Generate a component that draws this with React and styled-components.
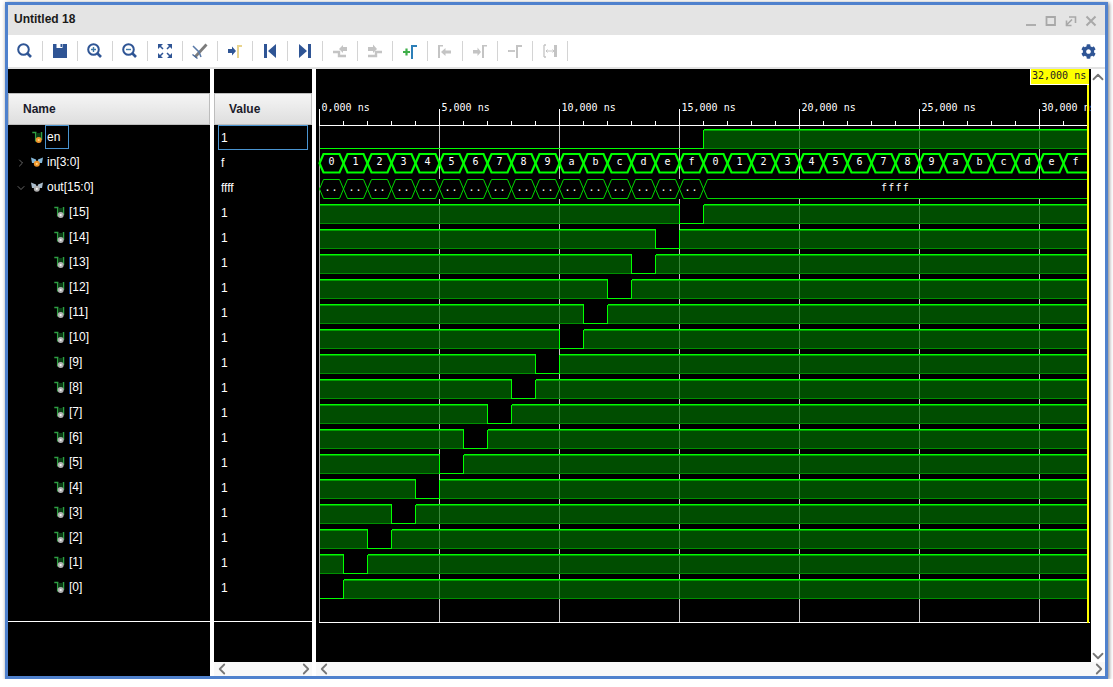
import React from 'react';
import styled, { createGlobalStyle } from 'styled-components';
import { FaCog } from 'react-icons/fa';
import { ChevronLeft, ChevronRight, ChevronUp, ChevronDown } from 'lucide-react';

const Global = createGlobalStyle`
  html, body { margin: 0; padding: 0; background: #fff; overflow: hidden; }
  * { box-sizing: border-box; }
`;

const Window = styled.div`
  width: 1103px; height: 677px; margin: 2px 0 0 5px;
  border: 3px solid #4f81cd;
  box-shadow: 1px 1px 4px rgba(0,0,0,.55);
  display: flex; flex-direction: column;
  font-family: "Liberation Sans", Arial, sans-serif;
  background: #000;
`;
const TitleBar = styled.div`
  height: 30px; background: #e4e4e4; display: flex; align-items: center;
  padding: 0 0 2px 6px; font-size: 12px; font-weight: 700; color: #1a1a1a;
  justify-content: space-between;
`;
const WinControls = styled.div`display: flex; margin-right: 4px;`;
const Toolbar = styled.div`
  height: 34px; background: #fff; border-bottom: 2px solid #e2e2e2;
  display: flex; align-items: center; flex: none;
`;
const ToolSlot = styled.div`
  width: 35px; height: 20px; display: flex; align-items: center; justify-content: center;
  border-right: 1px solid #d4d4d4; padding-right: 1px;
`;
const GearSlot = styled.div`margin-left: auto; margin-right: 9px; display: flex; color: #2f5595;`;
const Main = styled.div`
  flex: 1; min-height: 0; display: grid; grid-template-columns: 202px 98px 1fr; gap: 4px; background: #fff;
`;
const Column = styled.div`
  background: #000; padding-top: 24px; display: flex; flex-direction: column; min-height: 0;
`;
const Header = styled.div`
  height: 32px; flex: none; background: linear-gradient(#f5f5f5, #dedede);
  border: 1px solid #bdbdbd; font-size: 12px; font-weight: 700; color: #1a1a2a;
  display: flex; align-items: center; padding-left: ${p => p.$pad}px; padding-bottom: 1px;
`;
const RowList = styled.div`flex: none; height: 497px; border-bottom: 1px solid #fff;`;
const NameRow = styled.div`
  height: 25px; display: flex; align-items: center; padding-left: 7px; color: #fff; font-size: 12px;
`;
const Twist = styled.div`
  width: 12px; display: flex; justify-content: center; color: #8a8a8a; margin-right: ${p => p.$indent}px;
`;
const SigIcon = styled.svg`width: 14px; height: 16px; margin-left: 4px; flex: none;`;
const NameLabel = styled.div`
  height: 24px; display: flex; align-items: center; padding: 0 1px; align-self: flex-start;
  border: 1px solid ${p => (p.$selected ? '#4a94d0' : 'transparent')};
  ${p => p.$selected && 'width: 24px;'}
`;
const ValueCell = styled.div`
  height: 25px; margin: 0 4px; padding-left: 2px; display: flex; align-items: center;
  color: #fff; font-size: 12px;
  border: 1px solid ${p => (p.$selected ? '#4a94d0' : 'transparent')};
`;
const Filler = styled.div`flex: 1;`;
const HScroll = styled.div`
  height: 14px; flex: none; background: #f8f8f8; display: flex; align-items: center;
  justify-content: space-between; padding: 0 0 0 2px; color: #777;
  svg { margin: -2px -3px; flex: none; }
`;
const WaveColumn = styled.div`display: flex; flex-direction: column; min-height: 0; background: #000;`;
const WaveRow = styled.div`flex: 1; min-height: 0; display: flex; position: relative;`;
const Chart = styled.svg`display: block; width: 775px; height: 593px; flex: none;`;
const VScroll = styled.div`
  flex: 1; background: #fff; display: flex; flex-direction: column; justify-content: space-between;
  align-items: center; color: #777; padding: 2px 0 0;
  svg { margin: -3px -2px; flex: none; }
`;
const CursorFlag = styled.div`
  position: absolute; left: 714px; top: 0; width: 59px; height: 16px;
  background: #ffff00; border-left: 1px solid #fff; border-bottom: 1px solid #fff;
  font: 10px "DejaVu Sans Mono", monospace; color: #222; padding-left: 1px; line-height: 14px; white-space: nowrap;
`;

const BLUE = '#2f5595';
const GR = '#c4c4c4';
const ic = { width: 20, height: 20, viewBox: '0 0 20 20', fill: 'none' };

const Mag = ({ children }) => (
  <svg {...ic}>
    <circle cx="8.500" cy="8.500" r="5.300" stroke={BLUE} strokeWidth="2" />
    <path d="M12.500 12.500L16 16" stroke={BLUE} strokeWidth="2.600" />
    {children}
  </svg>
);
const tools = [
  <Mag key="s" />,
  <svg key="f" {...ic}>
    <path d="M3 3h14v14H3z" fill={BLUE} />
    <path d="M6.500 3h6v4h-6z" fill="#fff" />
    <path d="M10.500 3h1.500v3h-1.500z" fill={BLUE} />
  </svg>,
  <Mag key="zi"><path d="M6 8.500h5M8.500 6v5" stroke="#3f78a8" strokeWidth="1.400" /></Mag>,
  <Mag key="zo"><path d="M6 8.500h5" stroke="#3f78a8" strokeWidth="1.400" /></Mag>,
  <svg key="fit" {...ic} fill={BLUE}>
    <path d="M3 3h5L3 8zM17 3h-5l5 5zM3 17h5l-5-5zM17 17h-5l5-5z" />
    <path d="M5 5l3 3M15 5l-3 3M5 15l3-3M15 15l-3-3" stroke={BLUE} strokeWidth="1.500" />
  </svg>,
  <svg key="cur" {...ic}>
    <path d="M5 16L16.500 3.500" stroke="#7c7c7c" strokeWidth="2.800" />
    <path d="M3 5l6 6 2 5" stroke="#5a7aa8" strokeWidth="1.500" />
    <path d="M2.500 13.500l5 4" stroke="#4a6a9a" strokeWidth="1.500" />
  </svg>,
  <svg key="mk" {...ic}>
    <path d="M3 8h4V5.500L11 10l-4 4.500V12H3z" fill={BLUE} />
    <path d="M12 17V4h5v2h-3v11z" fill="#e9d48e" />
  </svg>,
  <svg key="prev" {...ic}><path d="M4 3h3v14H4zM16 3v14L8 10z" fill={BLUE} /></svg>,
  <svg key="next" {...ic}><path d="M13 3h3v14h-3zM4 3v14l8-7z" fill={BLUE} /></svg>,
  <svg key="pe" {...ic}>
    <path d="M3 11h6V15h7" stroke={GR} strokeWidth="2.400" />
    <path d="M9 8l4-4v2h4v4h-4v2z" fill={GR} />
  </svg>,
  <svg key="ne" {...ic}>
    <path d="M3 15h8v-4h6" stroke={GR} strokeWidth="2.400" />
    <path d="M3 6h5V3.500L12 8l-4 4v-2H3z" fill={GR} />
  </svg>,
  <svg key="add" {...ic}>
    <path d="M3 11h7M6.500 7.500v7" stroke="#3fae49" strokeWidth="2.200" />
    <path d="M11 18V4h6v2h-4v12z" fill="#2c7fb8" />
  </svg>,
  <svg key="pm" {...ic}>
    <path d="M3 17V4h5v1.600H5V17z" fill={GR} />
    <path d="M6 11l4.500-4v2.500H16v3h-5.500V15z" fill={GR} />
  </svg>,
  <svg key="nm" {...ic}>
    <path d="M3 9h4.500V6.500L11 11l-3.500 4v-2.500H3z" fill={GR} />
    <path d="M12 17V4h5v1.600h-3V17z" fill={GR} />
  </svg>,
  <svg key="dm" {...ic}>
    <path d="M3 10h7" stroke={GR} strokeWidth="1.800" />
    <path d="M11 17V4h6v2h-4v11z" fill={GR} />
  </svg>,
  <svg key="sw" {...ic}>
    <path d="M4 4h2M4 4v12M4 16h2" stroke={GR} strokeWidth="1.300" />
    <path d="M14 4h3v12h-3z" fill={GR} />
    <path d="M6 10h8M7.500 8.500L6 10l1.500 1.500M12.500 8.500L14 10l-1.500 1.500" stroke={GR} />
  </svg>,
];

const rows = [
  { name: 'en', value: '1', kind: 'bit', dot: 'orange', level: 0, selected: true },
  { name: 'in[3:0]', value: 'f', kind: 'bus', dot: 'orange', level: 0, twist: 'right' },
  { name: 'out[15:0]', value: 'ffff', kind: 'bus', dot: 'gray', level: 0, twist: 'down' },
  ...Array.from({ length: 16 }, (_, i) => ({
    name: `[${15 - i}]`, value: '1', kind: 'bit', dot: 'gray', level: 1,
  })),
];

const Icon = ({ kind, dot }) => {
  const c = dot === 'orange' ? '#f0962c' : '#b0b0b0';
  const core = dot === 'orange' ? '#ffd98a' : '#f4f4f4';
  const cx = kind === 'bit' ? 7.7 : 5.8;
  const cy = kind === 'bit' ? 10 : 8.8;
  return (
    <SigIcon viewBox="0 0 14 16">
      {kind === 'bit' ? (
        <>
          <path d="M1.300 2.500H4.700V11.500" stroke="#2ea043" strokeWidth="1.500" fill="none" />
          <path d="M10.500 2V10" stroke="#2ea043" strokeWidth="1.500" fill="none" />
          <path d="M5.500 3h4.200v5H5.500z" fill="#0a3d14" />
        </>
      ) : (
        <path
          d="M0 2.500L5 4.500L5.500 8L1 8ZM12 2.500L7 4.500L6.500 8L11 8Z"
          fill={dot === 'orange' ? '#86b8d8' : '#a9bccb'}
        />
      )}
      <circle cx={cx} cy={cy} r="3" fill={c} />
      <circle cx={cx} cy={cy} r="1.100" fill={core} />
    </SigIcon>
  );
};

const X = t => 319.5 + 24 * t;
const mono = { fontFamily: '"DejaVu Sans Mono", monospace', fontSize: 10, fill: '#fff' };
const BRIGHT = '#00ff00';
const EDGE = '#009000';

const BitTrace = ({ i, segs }) => {
  const top = 129.5 + 25 * i;
  const bot = 148.5 + 25 * i;
  return (
    <g shapeRendering="crispEdges">
      {segs.map(([a, b, high], n) => (
        <g key={n}>
          {high ? (
            <>
              <rect x={X(a)} y={top} width={X(b) - X(a)} height={bot - top} fill="#006e00" fillOpacity=".7" />
              <path d={`M${X(a)} ${top}H${X(b)}`} stroke={BRIGHT} />
              <path d={`M${X(a)} ${top + 1}H${X(b)}`} stroke="#00a000" />
              <path d={`M${X(a)} ${bot}H${X(b)}`} stroke={EDGE} />
            </>
          ) : (
            <path d={`M${X(a)} ${bot}H${X(b)}`} stroke={BRIGHT} />
          )}
          {n > 0 && <path d={`M${X(a)} ${top}V${bot}`} stroke={BRIGHT} />}
        </g>
      ))}
    </g>
  );
};

const hex = (a, b, top, bot, open) => {
  const x0 = X(a), x1 = X(b), m = (top + bot) / 2, s = 4;
  return open
    ? `M${x1} ${top}H${x0 + s}L${x0} ${m}L${x0 + s} ${bot}H${x1}`
    : `M${x0} ${m}L${x0 + s} ${top}H${x1 - s}L${x1} ${m}L${x1 - s} ${bot}H${x0 + s}Z`;
};

const HEX = '0123456789abcdef';

const Wave = () => {
  const majors = [0, 5, 10, 15, 20, 25, 30];
  const minors = [];
  for (let t = 1; t < 32; t++) if (t % 5) minors.push(t);
  return (
    <Chart viewBox="316 69 775 593">
      <g shapeRendering="crispEdges">
        {majors.slice(1).map(t => <path key={t} d={`M${X(t)} 125V622`} stroke="#c8c8c8" />)}
        <path d="M319.500 125V622" stroke="#a8a8a8" />
        <path d={`M${X(0)} 109V125`} stroke="#fff" />
        {majors.slice(1).map(t => <path key={t} d={`M${X(t)} 109V125`} stroke="#fff" />)}
        {minors.map(t => <path key={t} d={`M${X(t)} 121V125`} stroke="#fff" />)}
        <path d="M319 125.500H1087" stroke="#fff" />
        <path d="M319 622.500H1090" stroke="#fff" />
      </g>
      {majors.map(t => (
        <text key={t} x={X(t) + 2} y={110.5} {...mono}>
          {t === 0 ? '0,000' : (t * 1000).toLocaleString('en-US')} ns
        </text>
      ))}
      <BitTrace i={0} segs={[[0, 16, 0], [16, 32, 1]]} />
      {Array.from({ length: 32 }, (_, t) => (
        <g key={t}>
          <path d={hex(t, t + 1, 154, 172.5, t === 31)} fill="none" stroke={BRIGHT} strokeWidth="2.200" />
          <text x={X(t) + 12} y={165} textAnchor="middle" {...mono}>{HEX[t % 16]}</text>
        </g>
      ))}
      <rect x="320" y="179" width="767" height="20" fill="#000" />
      {Array.from({ length: 16 }, (_, t) => (
        <g key={t}>
          <path d={hex(t, t + 1, 179.5, 198.5)} fill="none" stroke="#00d800" />
          <text x={X(t) + 12} y={190.5} textAnchor="middle" letterSpacing="1" {...mono}>..</text>
        </g>
      ))}
      <path d={hex(16, 32, 179.5, 198.5, true)} fill="none" stroke="#00d800" />
      <text x="895.500" y={190.5} textAnchor="middle" letterSpacing="1.200" {...mono}>ffff</text>
      {Array.from({ length: 16 }, (_, n) => {
        const k = 15 - n;
        const segs = [];
        if (k > 0) segs.push([0, k, 1]);
        segs.push([k, k + 1, 0]);
        segs.push([k + 1, 32, 1]);
        return <BitTrace key={k} i={n + 3} segs={segs} />;
      })}
      <rect x="1087" y="85" width="2" height="538" fill="#ffff00" />
    </Chart>
  );
};

const W = { width: 20, height: 20, viewBox: '0 0 20 20', fill: 'none', stroke: '#a8a8a8', strokeWidth: 1.6 };

export default function App() {
  return (
    <>
      <Global />
      <Window>
        <TitleBar>
          Untitled 18
          <WinControls>
            <svg {...W}><path d="M5 16H15" strokeWidth="1.800" /></svg>
            <svg {...W}><path d="M5.500 8H14V16H5.500z" strokeWidth="1.800" /></svg>
            <svg {...W}><path d="M8 8h6.500V14M5 16.500l6-6M5.500 11.500V16.500H10.500" /></svg>
            <svg {...W}><path d="M5.500 7.500L14.500 16.500M14.500 7.500L5.500 16.500" strokeWidth="2" /></svg>
          </WinControls>
        </TitleBar>
        <Toolbar>
          {tools.map((t, i) => <ToolSlot key={i}>{t}</ToolSlot>)}
          <GearSlot><FaCog size={15} /></GearSlot>
        </Toolbar>
        <Main>
          <Column>
            <Header $pad={14}>Name</Header>
            <RowList>
              {rows.map(r => (
                <NameRow key={r.name}>
                  <Twist $indent={r.level * 22}>
                    {r.twist === 'right' && <ChevronRight size={14} strokeWidth={1.500} />}
                    {r.twist === 'down' && <ChevronDown size={14} strokeWidth={1.500} />}
                  </Twist>
                  <Icon kind={r.kind} dot={r.dot} />
                  <NameLabel $selected={r.selected}>{r.name}</NameLabel>
                </NameRow>
              ))}
            </RowList>
          </Column>
          <Column>
            <Header $pad={14}>Value</Header>
            <RowList>
              {rows.map(r => (
                <ValueCell key={r.name} $selected={r.selected}>{r.value}</ValueCell>
              ))}
            </RowList>
            <Filler />
            <HScroll>
              <ChevronLeft size={18} strokeWidth={2.400} />
              <ChevronRight size={18} strokeWidth={2.400} />
            </HScroll>
          </Column>
          <WaveColumn>
            <WaveRow>
              <Wave />
              <CursorFlag>32,000 ns</CursorFlag>
              <VScroll>
                <ChevronUp size={18} strokeWidth={2.400} />
                <ChevronDown size={18} strokeWidth={2.400} />
              </VScroll>
            </WaveRow>
            <HScroll>
              <ChevronLeft size={18} strokeWidth={2.400} />
              <ChevronRight size={18} strokeWidth={2.400} />
            </HScroll>
          </WaveColumn>
        </Main>
      </Window>
    </>
  );
}
